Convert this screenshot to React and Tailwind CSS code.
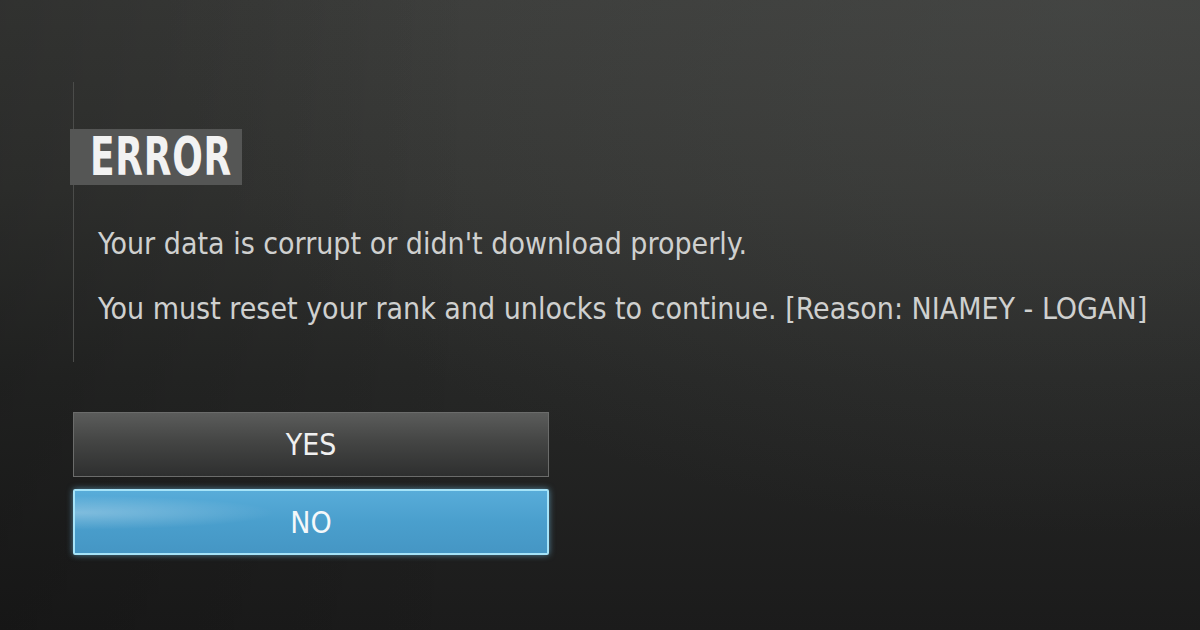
export default function App() {
  const font = { fontFamily: '"Liberation Sans Narrow", "DejaVu Sans Condensed", "Liberation Sans", sans-serif' };
  return (
    <div
      className="relative w-[1200px] h-[630px] overflow-hidden bg-[linear-gradient(180deg,#3b3c3a_0%,#343533_30%,#262726_60%,#1b1b1b_100%)]"
      style={font}
    >
      <div className="absolute inset-0 bg-[radial-gradient(ellipse_at_90%_0%,rgba(80,82,80,0.4),transparent_60%)]" />
      <div className="absolute inset-0 bg-[linear-gradient(90deg,rgba(0,0,0,0.18),transparent_40%)]" />
      <div className="relative pt-[82px] pl-[73px]">
        <div className="border-l border-[#4b4c4a] h-[280px] pt-[47px]">
          <div className="-ml-[4px] flex h-[56px] w-[172px] items-center bg-[#555655]">
            <div className="h-full w-[4px] bg-[#a9aaa9]" />
            <span className="ml-[20px] origin-left scale-x-[0.74] text-[54px] font-bold leading-none tracking-[1px] text-[#f2f2f2]">ERROR</span>
          </div>
          <div className="pl-[24px] text-[30px] leading-none text-[#cfd0cf]">
            <p className="mt-[44px]">Your data is corrupt or didn't download properly.</p>
            <p className="mt-[35px]">You must reset your rank and unlocks to continue. [Reason: NIAMEY - LOGAN]</p>
          </div>
        </div>
        <div className="mt-[50px] flex w-[476px] flex-col gap-[12px]">
          <div className="flex h-[65px] items-center justify-center border border-[#6b6c6b] bg-[linear-gradient(180deg,#5b5c5b_0%,#444544_45%,#2e2f2f_100%)] text-[30px] text-[#f0f0f0]">
            YES
          </div>
          <div className="relative flex h-[66px] items-center justify-center overflow-hidden rounded-[2px] border-2 border-[#a5e3f8] bg-[linear-gradient(180deg,#58acd9_0%,#4a9fcd_50%,#4596c4_100%)] text-[30px] text-[#f4f8fa] shadow-[0_0_6px_rgba(120,200,240,0.6)]">
            <div className="absolute inset-0 bg-[radial-gradient(ellipse_at_0%_35%,rgba(255,255,255,0.28),transparent_30%)]" />
            <span className="relative">NO</span>
          </div>
        </div>
      </div>
    </div>
  );
}
